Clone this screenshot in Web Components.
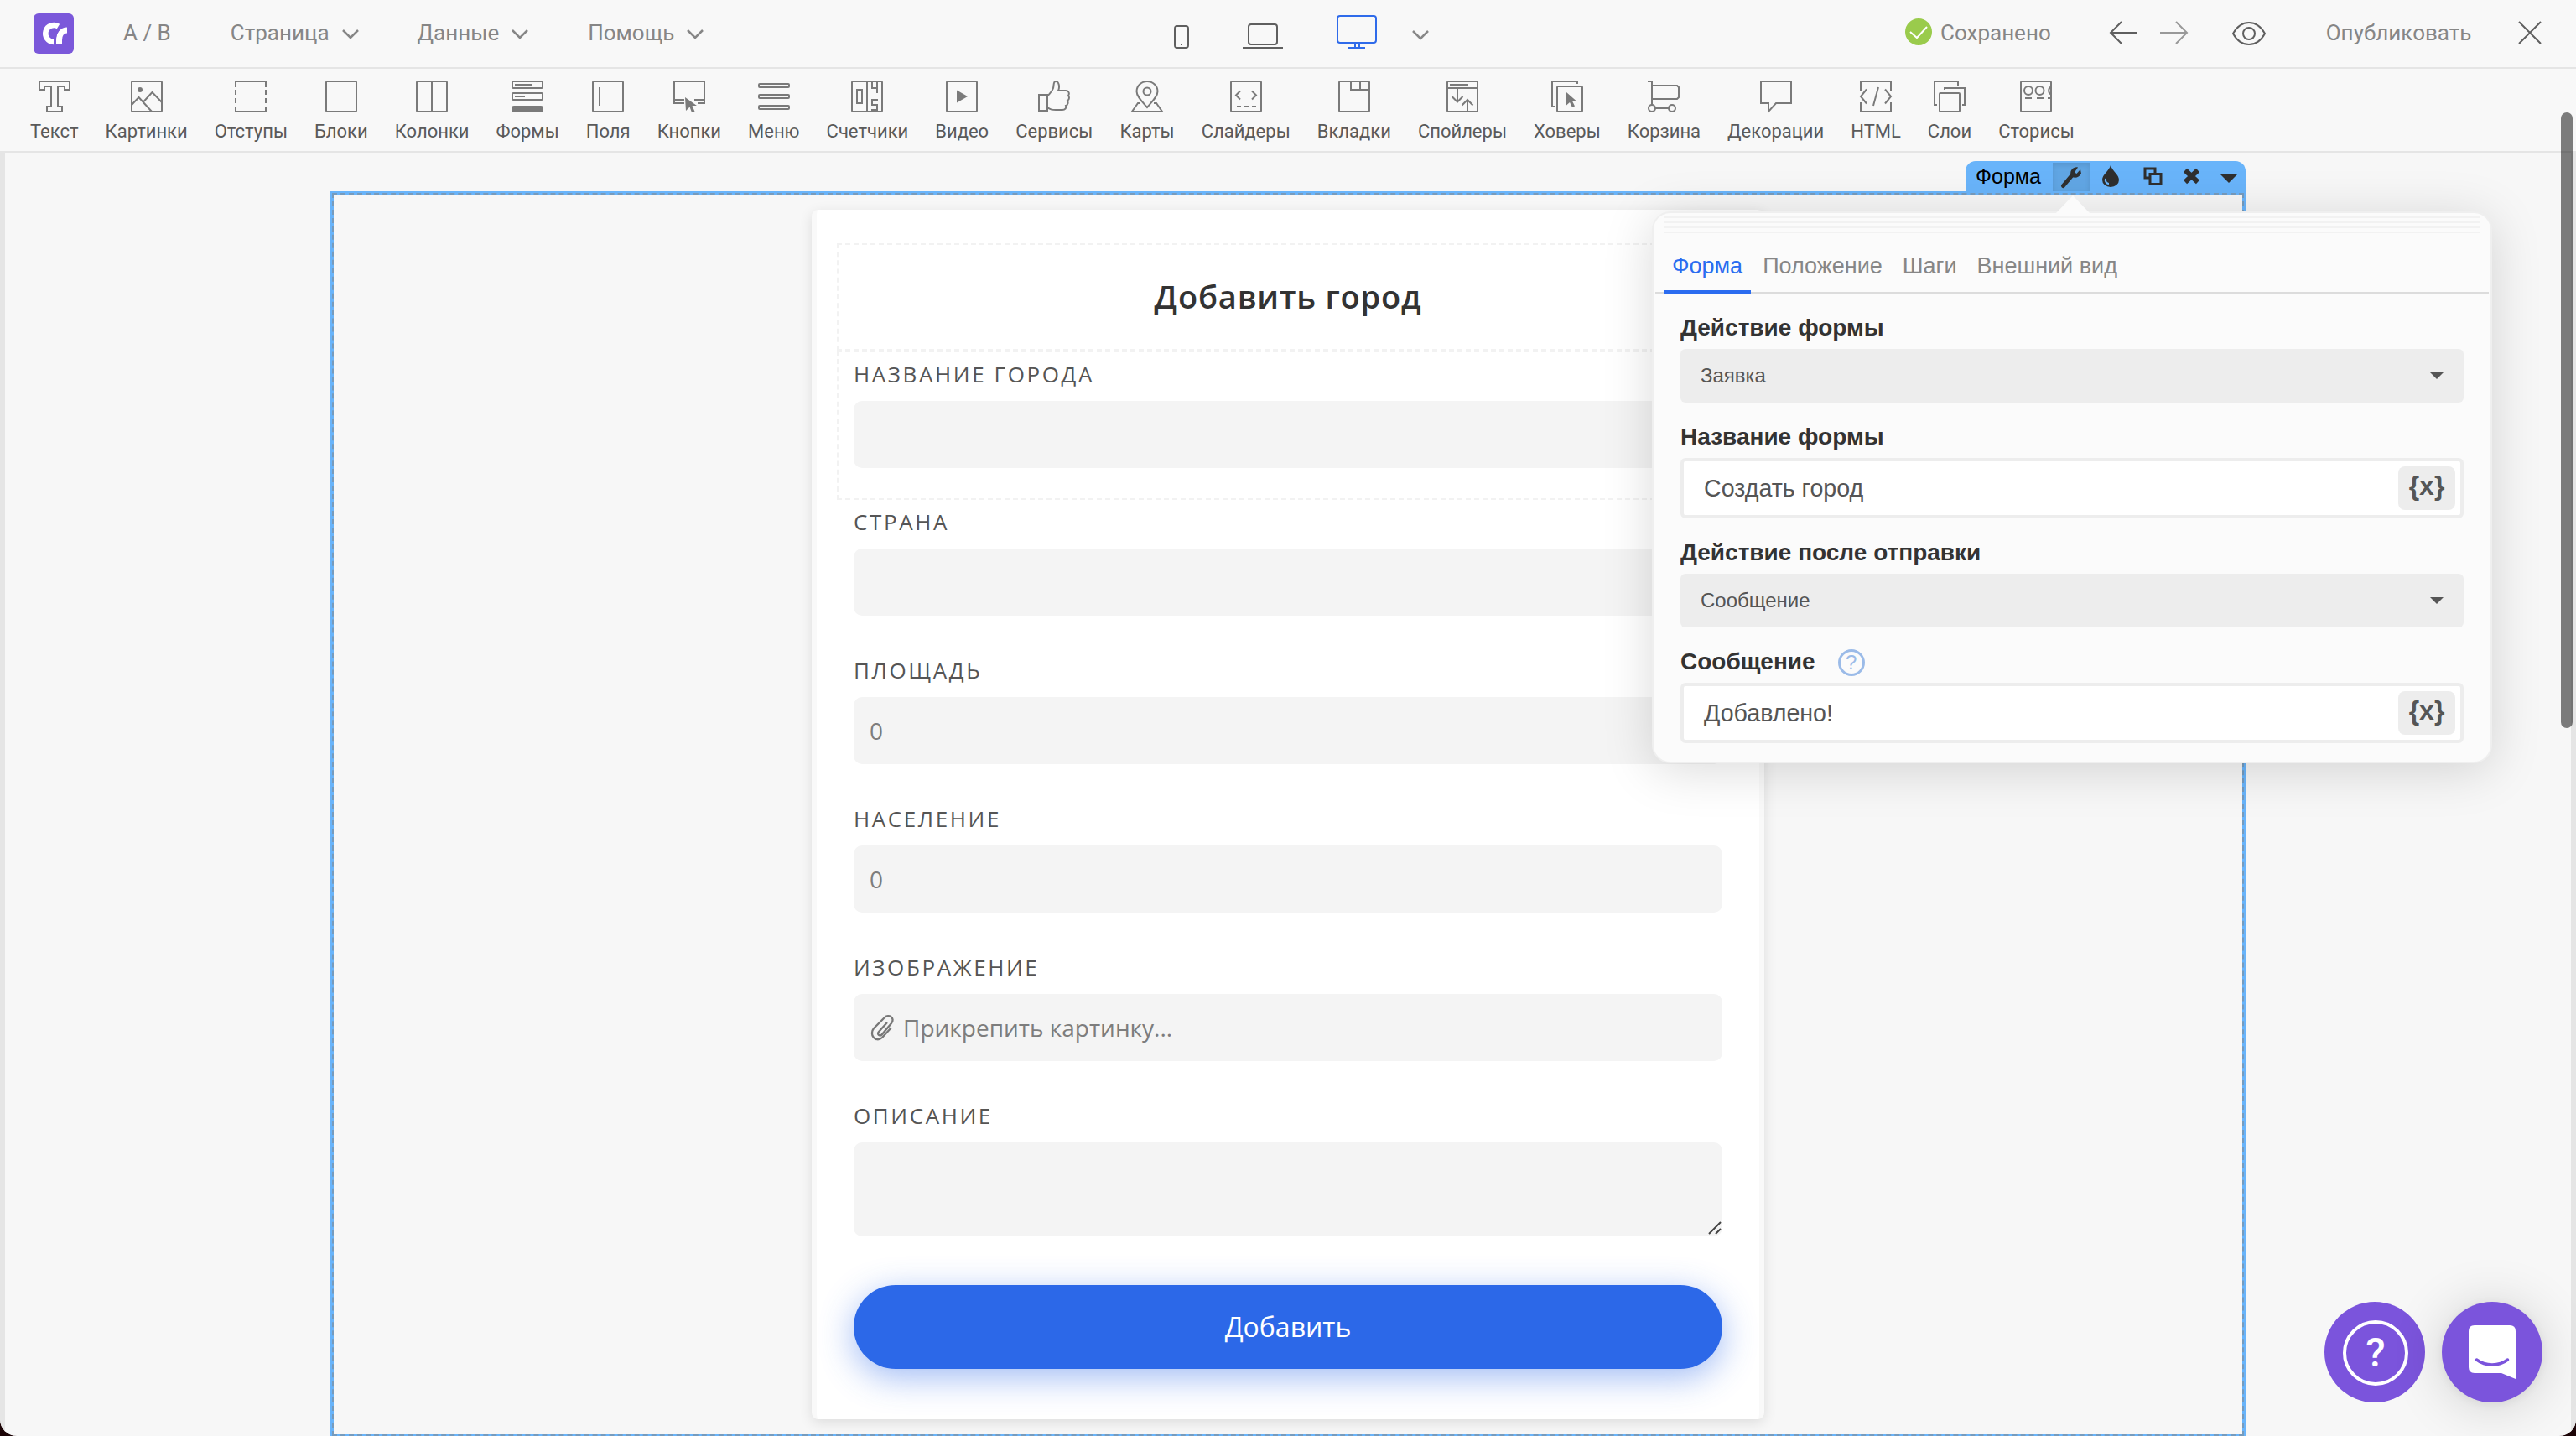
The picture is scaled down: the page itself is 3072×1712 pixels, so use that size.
<!DOCTYPE html>
<html lang="ru">
<head>
<meta charset="UTF-8">
<title>Редактор страницы</title>
<style>
    html, body {
        margin: 0;
        height: 100%;
        overflow: hidden;
        background: #1c0406;
    }

    body {
        --blue: #2c68e8;
        --frame: #69b4fa;
        --violet: #7b54dc;
        --grey: #868686;
        font-family: Roboto, "Liberation Sans", sans-serif;
    }
</style>
</head>
<body>
<editor-app></editor-app>

<script>
const ICONS = {
    // toolbar
    text: '<path d="M1 1H37V11H31V7H23V31H28V37H10V31H15V7H7V11H1Z"/>',
    images: '<rect x="1" y="1" width="36" height="36" rx="1"/><circle cx="11" cy="11" r="3" fill="currentColor" stroke="none"/><path d="M1 29L9.500 20L25 37M15 25.500L25.500 14L37 26"/>',
    spacing: '<path d="M1 8V1H37V8M1 31V37H37V31M1 11V17M1 21V27M37 11V17M37 21V27"/>',
    block: '<rect x="1" y="1" width="36" height="36" rx="1"/>',
    columns: '<rect x="1" y="1" width="36" height="36" rx="1"/><path d="M19 1V37"/>',
    forms: '<rect x="1" y="1" width="36" height="8" rx="1"/><path d="M4 5H25M4 19H16"/><rect x="1" y="15" width="36" height="8" rx="1"/><rect y="30" width="38" height="8" rx="3" fill="currentColor" stroke="none"/>',
    field: '<rect x="1" y="1" width="36" height="36" rx="1"/><path d="M9 8V30"/>',
    button: '<path d="M13 27H1V1H37V27H29M1 23H13M25 23H37"/><path d="M14 20L28 30H22.500L25.500 37L22 38L19.500 31.500L15 36Z" fill="currentColor" stroke="none"/>',
    menu: '<rect x="1" y="4" width="36" height="4" rx="1"/><rect x="1" y="17" width="36" height="4" rx="1"/><rect x="1" y="30" width="36" height="4" rx="1"/>',
    counter: '<rect x="1" y="1" width="36" height="36" rx="1"/><path d="M19 1V37M7 11H13V27H7ZM25 1V9H31M31 1V15M32 23H25V29H31V35H24"/>',
    video: '<rect x="1" y="1" width="36" height="36" rx="1"/><path d="M13 11.500L26 19L13 26.500Z" fill="currentColor" stroke="none"/>',
    thumb: '<path d="M1 17H11V36H1ZM11 32C15 35 17 35 21 35H29C32 35 34 33 33 30C36 29 36 26 35 24C38 22 37 19 36 18C38 15 36 12 33 12H24C26 8 25 1 21 1C18 1 19 5 18 9C17 13 14 15 11 19"/>',
    pin: '<path d="M19 32C13 25 6.500 19 6.500 13A12.500 12 0 0 1 31.500 13C31.500 19 25 25 19 32Z"/><circle cx="19" cy="13" r="4.500"/><path d="M11 27H8L1 37H37L30 27H27"/>',
    slider: '<rect x="1" y="1" width="36" height="36" rx="1"/><path d="M12 12.500L7 17.500L12 22.500M26 12.500L31 17.500L26 22.500M8 31H13M17 31H22M26 31H31"/>',
    tabs: '<rect x="1" y="1" width="36" height="36" rx="1"/><path d="M15 1V11H37M26 1V11"/>',
    spoiler: '<rect x="1" y="1" width="36" height="36" rx="1"/><path d="M1 9H37M4 5H26M13 10V25M6.500 19L13 25.500L19.500 19M25 37V23M18.500 29.500L25 23L31.500 29.500"/>',
    hover: '<path d="M4 31H1V1H31V4"/><rect x="7" y="7" width="30" height="30" rx="1"/><path d="M18 14L30 24.500H25L28 30.500L25 32L22 26L18 29.500Z" fill="currentColor" stroke="none"/>',
    cart: '<path d="M0 1H5V29M5 6H35L37 8V20L35 22H5M9 33H25"/><circle cx="5" cy="33" r="4"/><circle cx="29" cy="33" r="4"/>',
    decor: '<path d="M1 1H37V27H19L10 37V27H1Z"/>',
    html: '<path d="M1 12V1H37V12M1 26V37H37V26M8 10.500L1 19L8 27.500M30 10.500L37 19L30 27.500M22 8L16 30"/>',
    layers: '<path d="M29 6V1H1V29H4M13 11V9H37V29H34"/><rect x="7" y="15" width="24" height="22" rx="1"/>',
    stories: '<rect x="1" y="1" width="36" height="36" rx="1"/><circle cx="10" cy="12" r="5"/><circle cx="23.500" cy="12" r="5"/><path d="M37 7.500A5 5 0 0 0 37 16.500M6 21H14M20 21H28M33 21H37"/>',
    // top bar
    chevron: '<path d="M1 1L10 10L19 1" stroke-width="2.500"/>',
    phone: '<rect x="1" y="1" width="16" height="26" rx="3"/><path d="M8 23H10"/>',
    laptop: '<rect x="7" y="1" width="34" height="24" rx="3"/><path d="M0 29H48"/>',
    monitor: '<rect x="1" y="1" width="46" height="32" rx="3"/><path d="M22 33V39M27 33V39M14 39H34"/>',
    saved: '<circle cx="16" cy="16" r="16" fill="#9acb4c" stroke="none"/><path d="M6 16L14 23L26 10" stroke="#fff"/>',
    back: '<path d="M34 14H2M15 1L2 14L15 27"/>',
    forward: '<path d="M0 14H32M19 1L32 14L19 27"/>',
    eye: '<path d="M1 14C6 5 13 1 20 1C27 1 34 5 39 14C34 23 27 27 20 27C13 27 6 23 1 14Z"/><circle cx="20" cy="14" r="7"/>',
    close: '<path d="M1 1L27 27M27 1L1 27"/>',
    logo: '<rect width="48" height="48" rx="6" fill="#7b58da" stroke="none"/><path d="M29.500 15.500A10 10 0 1 0 24 34" stroke="#fff" stroke-width="6.500"/><path d="M30.500 37V32C30.500 25 34 20 40 20" stroke="#fff" stroke-width="7"/><path d="M25.500 37C24.500 29 27.500 20 34 15" stroke="#7b58da" stroke-width="2"/>',
    // selection tag
    wrench: '<path d="M2.500 22.500L13 10" stroke-width="5" stroke-linecap="round"/><path d="M23 3L18.500 8L16 6.500L20 0.500C15 -0.500 10 4 11.500 9.500C13 14 21 14 24 8Z" fill="currentColor" stroke="none"/>',
    drop: '<path d="M10 0C12 7 20 11 20 17.500A10 8.500 0 0 1 0 17.500C0 11 8 7 10 0Z" fill="currentColor" stroke="none"/><path d="M4 16C3 20 6 22 8 22" stroke="#69b4fa"/>',
    copy: '<path d="M7 13H2V2H14V7" stroke-width="3"/><rect x="8" y="8.500" width="13" height="12" stroke-width="3"/>',
    remove: '<path d="M3 3L18 17M18 3L3 17" stroke-width="6"/>',
    triangle: '<path d="M0 0H20L10 10Z" fill="currentColor" stroke="none"/>',
    // form and panel
    clip: '<path d="M21 10L11 21C8 24.500 13 27 15 24L26 11C31 5 23 -1 18 4L5 17C-1 24 7 35 15 28L26 16" stroke-width="2.300"/>',
    caret: '<path d="M0 0H16L8 8Z" fill="currentColor" stroke="none"/>',
    help: '<circle cx="16" cy="16" r="14.500" stroke-width="3"/>',
    grip: '<path d="M1 15L15 1M9 15L15 9"/>',
    messenger: '<path d="M7 0H49Q56 0 56 7V64L39 57H7Q0 57 0 50V7Q0 0 7 0Z" fill="#fff" stroke="none"/><path d="M9.500 41C20 49 36 49 46.500 41" stroke="#7b54dc" stroke-width="3.500" stroke-linecap="round"/>'
};

class UiIcon extends HTMLElement {
    connectedCallback() {
        const w = this.getAttribute('w') || 38;
        const h = this.getAttribute('h') || w;
        this.attachShadow({ mode: 'open' });
        this.shadowRoot.innerHTML = `
            <style>
                :host { display: block; flex: none; width: ${w}px; height: ${h}px; }
                svg { display: block; overflow: visible; }
            </style>
            <svg width="${w}" height="${h}" viewBox="0 0 ${w} ${h}" fill="none" stroke="currentColor" stroke-width="2">${ICONS[this.getAttribute('name')]}</svg>
        `;
    }
}

class TopBar extends HTMLElement {
    connectedCallback() {
        this.attachShadow({ mode: 'open' });
        this.shadowRoot.innerHTML = `
            <style>
                :host {
                    display: grid;
                    grid-template-columns: 1400px 872px 1fr;
                    align-items: center;
                    height: 80px;
                    border-bottom: 2px solid #e5e5e5;
                    background: #f8f8f8;
                    color: var(--grey);
                    font-size: 26px;
                }
                .group { display: flex; align-items: center; height: 78px; padding-bottom: 2px; }
                .menu { padding-left: 40px; }
                .logo { margin-top: 2px; }
                .ab { margin-left: 59px; margin-right: 1px; }
                .item { display: flex; align-items: center; gap: 15px; margin-left: 70px; }
                .item:last-child { margin-left: 71px; }
                .item ui-icon { margin-top: 3px; }
                .devices { color: #5f5f5f; align-items: flex-end; height: 58px; padding: 0; align-self: start; }
                .laptop { margin-left: 64px; }
                .monitor { margin-left: 64px; color: #2f6bea; }
                .more { margin: 0 0 12px 42px; color: #888; }
                .saved { margin-right: 10px; margin-top: -2px; }
                .back { margin-left: 69px; color: #5f5f5f; }
                .forward { margin-left: 27px; color: #999; }
                .eye { margin: 2px 0 0 52px; color: #5f5f5f; }
                .publish { margin-left: 72px; }
                .close { margin-left: auto; margin-right: 41px; color: #5f5f5f; }
            </style>
            <div class="group menu">
                <ui-icon class="logo" name="logo" w="48"></ui-icon>
                <span class="ab">A / B</span>
                <div class="item"><span>Страница</span><ui-icon name="chevron" w="20" h="11"></ui-icon></div>
                <div class="item"><span>Данные</span><ui-icon name="chevron" w="20" h="11"></ui-icon></div>
                <div class="item"><span>Помощь</span><ui-icon name="chevron" w="20" h="11"></ui-icon></div>
            </div>
            <div class="group devices">
                <ui-icon name="phone" w="18" h="28"></ui-icon>
                <ui-icon class="laptop" name="laptop" w="48" h="30"></ui-icon>
                <ui-icon class="monitor" name="monitor" w="48" h="40"></ui-icon>
                <ui-icon class="more" name="chevron" w="20" h="10"></ui-icon>
            </div>
            <div class="group">
                <ui-icon class="saved" name="saved" w="32"></ui-icon>
                <span>Сохранено</span>
                <ui-icon class="back" name="back" w="34" h="28"></ui-icon>
                <ui-icon class="forward" name="forward" w="34" h="28"></ui-icon>
                <ui-icon class="eye" name="eye" w="40" h="28"></ui-icon>
                <span class="publish">Опубликовать</span>
                <ui-icon class="close" name="close" w="28"></ui-icon>
            </div>
        `;
    }
}

const TOOLS = [
    ['text', 'Текст'], ['images', 'Картинки'], ['spacing', 'Отступы'], ['block', 'Блоки'],
    ['columns', 'Колонки'], ['forms', 'Формы'], ['field', 'Поля'], ['button', 'Кнопки'],
    ['menu', 'Меню'], ['counter', 'Счетчики'], ['video', 'Видео'], ['thumb', 'Сервисы'],
    ['pin', 'Карты'], ['slider', 'Слайдеры'], ['tabs', 'Вкладки'], ['spoiler', 'Спойлеры'],
    ['hover', 'Ховеры'], ['cart', 'Корзина'], ['decor', 'Декорации'], ['html', 'HTML'],
    ['layers', 'Слои'], ['stories', 'Сторисы']
];

class ToolBar extends HTMLElement {
    connectedCallback() {
        this.attachShadow({ mode: 'open' });
        this.shadowRoot.innerHTML = `
            <style>
                :host {
                    display: flex;
                    height: 98px;
                    padding-left: 20px;
                    border-bottom: 2px solid #e5e5e5;
                    background: #f8f8f8;
                }
                .tool {
                    display: flex;
                    flex-direction: column;
                    align-items: center;
                    gap: 9px;
                    padding: 14px 16px 0;
                    color: #7a7a7a;
                }
                span { color: #5a5a5a; font-size: 22px; line-height: 28px; }
            </style>
            ${TOOLS.map(([icon, label]) => `<div class="tool"><ui-icon name="${icon}"></ui-icon><span>${label}</span></div>`).join('')}
        `;
    }
}

class FormField extends HTMLElement {
    connectedCallback() {
        this.attachShadow({ mode: 'open' });
        this.shadowRoot.innerHTML = `
            <style>
                :host { display: block; height: 177px; }
                label {
                    display: block;
                    height: 37px;
                    padding-bottom: 13px;
                    color: #555;
                    font-size: 26px;
                    line-height: 37px;
                    letter-spacing: 2.6px;
                    text-transform: uppercase;
                }
                .box {
                    position: relative;
                    box-sizing: border-box;
                    display: flex;
                    align-items: center;
                    gap: 10px;
                    height: 80px;
                    padding: 0 19px;
                    border-radius: 10px;
                    background: #f4f4f4;
                    color: #7d7d7d;
                    font-size: 28px;
                }
                :host([multiline]) .box { height: 112px; }
                .grip { position: absolute; right: 1px; bottom: 2px; color: #444; }
            </style>
            <label>${this.getAttribute('label')}</label>
            <div class="box">
                <slot></slot>
                ${this.hasAttribute('multiline') ? '<ui-icon class="grip" name="grip" w="16"></ui-icon>' : ''}
            </div>
        `;
    }
}

class CityForm extends HTMLElement {
    connectedCallback() {
        this.attachShadow({ mode: 'open' });
        this.shadowRoot.innerHTML = `
            <style>
                :host {
                    display: block;
                    box-sizing: border-box;
                    width: 1136px;
                    height: 1442px;
                    padding: 40px 24px 0;
                    border: solid #f9f9f9;
                    border-width: 0 6px;
                    border-radius: 8px;
                    background: #fff;
                    box-shadow: 0 4px 16px rgba(0, 0, 0, 0.11);
                    font-family: "Open Sans", "Noto Sans", sans-serif;
                }
                .cell { box-sizing: border-box; border: 2px dashed #f2f2f2; }
                h2 {
                    height: 128px;
                    margin: 0;
                    color: #333;
                    font-size: 38px;
                    font-weight: 600;
                    line-height: 123px;
                    letter-spacing: 0.8px;
                    text-align: center;
                }
                .first { height: 178px; padding: 8px 18px 0; }
                .rest { padding: 8px 20px 0; }
                .clip { color: #777; margin-right: 1px; }
                button {
                    display: block;
                    width: 1036px;
                    height: 100px;
                    margin: 43px auto 0;
                    padding: 0 0 2px;
                    border: 0;
                    border-radius: 50px;
                    background: var(--blue);
                    box-shadow: 0 10px 40px rgba(44, 104, 232, 0.45);
                    color: #fff;
                    font: 32px "Open Sans", "Noto Sans", sans-serif;
                }
            </style>
            <h2 class="cell">Добавить город</h2>
            <div class="cell first"><form-field label="Название города"></form-field></div>
            <div class="rest">
                <form-field label="Страна"></form-field>
                <form-field label="Площадь">0</form-field>
                <form-field label="Население">0</form-field>
                <form-field label="Изображение"><ui-icon class="clip" name="clip" w="29" h="32"></ui-icon>Прикрепить картинку...</form-field>
                <form-field label="Описание" multiline></form-field>
            </div>
            <button>Добавить</button>
        `;
    }
}

class SelectionTag extends HTMLElement {
    connectedCallback() {
        this.attachShadow({ mode: 'open' });
        this.shadowRoot.innerHTML = `
            <style>
                :host {
                    display: flex;
                    align-items: center;
                    box-sizing: border-box;
                    width: 334px;
                    height: 36px;
                    padding-left: 12px;
                    border-radius: 12px 12px 0 0;
                    background: var(--frame);
                    color: #2f2f2f;
                    font: 25px "Liberation Sans", Arial, sans-serif;
                }
                .name { width: 92px; color: #000; line-height: 36px; }
                .active {
                    display: flex;
                    align-items: center;
                    justify-content: center;
                    align-self: flex-end;
                    width: 44px;
                    height: 34px;
                    background: #61a6e4;
                    box-shadow: inset 0 3px 6px rgba(0, 0, 0, 0.1);
                }
                .drop { margin-left: 15px; }
                .copy { margin-left: 29px; }
                .remove { margin-left: 24px; }
                .triangle { margin: 6px 0 0 24px; }
            </style>
            <span class="name">Форма</span>
            <div class="active"><ui-icon name="wrench" w="25"></ui-icon></div>
            <ui-icon class="drop" name="drop" w="20" h="26"></ui-icon>
            <ui-icon class="copy" name="copy" w="23" h="22"></ui-icon>
            <ui-icon class="remove" name="remove" w="21" h="20"></ui-icon>
            <ui-icon class="triangle" name="triangle" w="20" h="10"></ui-icon>
        `;
    }
}

class PanelField extends HTMLElement {
    connectedCallback() {
        const value = this.getAttribute('value');
        const control = this.hasAttribute('select')
            ? `<div class="select"><span>${value}</span><ui-icon name="caret" w="16" h="8"></ui-icon></div>`
            : `<div class="input"><span>${value}</span><b>{x}</b></div>`;
        this.attachShadow({ mode: 'open' });
        this.shadowRoot.innerHTML = `
            <style>
                :host { display: block; padding-top: 25px; }
                .label {
                    display: flex;
                    align-items: center;
                    height: 32px;
                    margin-bottom: 9px;
                    color: #333;
                    font-size: 28px;
                    font-weight: bold;
                    line-height: 32px;
                }
                .select, .input {
                    display: flex;
                    align-items: center;
                    justify-content: space-between;
                    box-sizing: border-box;
                    border-radius: 6px;
                    color: #555;
                }
                .select { height: 64px; padding: 0 24px; background: #ededed; font-size: 24px; }
                .input {
                    height: 72px;
                    padding: 0 6px 0 24px;
                    border: 4px solid #ededed;
                    background: #fff;
                    font-size: 28.6px;
                }
                b {
                    width: 68px;
                    height: 52px;
                    border-radius: 8px;
                    background: #ededed;
                    font: bold 32px/47px "Liberation Sans", sans-serif;
                    text-align: center;
                }
            </style>
            <div class="label">${this.getAttribute('label')}<slot></slot></div>
            ${control}
        `;
    }
}

class SettingsPanel extends HTMLElement {
    connectedCallback() {
        this.attachShadow({ mode: 'open' });
        this.shadowRoot.innerHTML = `
            <style>
                :host {
                    display: block;
                    box-sizing: border-box;
                    width: 1002px;
                    height: 658px;
                    border: 2px solid #efefef;
                    border-radius: 22px;
                    background: #fbfbfb;
                    box-shadow: 0 8px 60px rgba(0, 0, 0, 0.15);
                    font-family: "Liberation Sans", Arial, sans-serif;
                }
                .arrow {
                    position: absolute;
                    top: -21px;
                    left: 480px;
                    border: solid transparent;
                    border-width: 0 20px 21px;
                    border-bottom-color: #fbfbfb;
                }
                .handle {
                    height: 20px;
                    margin: 4px 12px 0;
                    background: repeating-linear-gradient(#f2f2f2 0 2px, transparent 2px 6px);
                }
                nav {
                    display: flex;
                    gap: 4px;
                    box-sizing: border-box;
                    height: 72px;
                    margin: 0 2px;
                    padding-left: 10px;
                    border-bottom: 2px solid #dcdcdc;
                    color: var(--grey);
                    font-size: 27px;
                    line-height: 78px;
                }
                nav span { height: 68px; padding: 0 10px; border-bottom: 4px solid transparent; }
                nav .on { border-color: #2b6cf0; color: #2b6cf0; }
                .fields { padding: 0 32px; }
                .help {
                    display: inline-grid;
                    place-items: center;
                    margin: 2px 0 0 27px;
                    color: #9bbbe8;
                    font: 24px/32px "Liberation Sans", sans-serif;
                }
                .help > * { grid-area: 1 / 1; }
            </style>
            <div class="arrow"></div>
            <div class="handle"></div>
            <nav>
                <span class="on">Форма</span><span>Положение</span><span>Шаги</span><span>Внешний вид</span>
            </nav>
            <div class="fields">
                <panel-field label="Действие формы" value="Заявка" select></panel-field>
                <panel-field label="Название формы" value="Создать город"></panel-field>
                <panel-field label="Действие после отправки" value="Сообщение" select></panel-field>
                <panel-field label="Сообщение" value="Добавлено!"><span class="help"><ui-icon name="help" w="32"></ui-icon><span>?</span></span></panel-field>
            </div>
        `;
    }
}

class ChatButtons extends HTMLElement {
    connectedCallback() {
        this.attachShadow({ mode: 'open' });
        this.shadowRoot.innerHTML = `
            <style>
                :host { display: flex; gap: 20px; }
                div {
                    display: grid;
                    place-items: center;
                    width: 120px;
                    height: 120px;
                    border-radius: 50%;
                    background: var(--violet);
                }
                .ring {
                    box-sizing: border-box;
                    width: 78px;
                    height: 78px;
                    margin: 2px 0 0 2px;
                    border: 4px solid #fff;
                    border-radius: 50%;
                    color: #fff;
                    font-size: 48px;
                    font-weight: 500;
                    line-height: 70px;
                    text-align: center;
                }
                .chat { box-shadow: 0 2px 12px rgba(0, 0, 0, 0.06), 0 4px 64px rgba(0, 0, 0, 0.16); }
            </style>
            <div><span class="ring">?</span></div>
            <div class="chat"><ui-icon name="messenger" w="56" h="64"></ui-icon></div>
        `;
    }
}

class EditorApp extends HTMLElement {
    connectedCallback() {
        this.attachShadow({ mode: 'open' });
        this.shadowRoot.innerHTML = `
            <style>
                :host {
                    display: flex;
                    flex-direction: column;
                    position: relative;
                    width: 3072px;
                    height: 1712px;
                    border-radius: 0 0 20px 20px;
                    overflow: hidden;
                    background: #f7f7f7;
                }
                main {
                    flex: 1;
                    min-height: 0;
                    padding: 46px 388px 0;
                    border: solid #e5e5e5;
                    border-width: 0 6px;
                }
                .frame {
                    position: relative;
                    box-sizing: border-box;
                    width: 2284px;
                    height: 1486px;
                    border: 2px solid var(--frame);
                }
                .content {
                    box-sizing: border-box;
                    height: 1482px;
                    padding-top: 18px;
                    border: 2px dashed rgba(128, 140, 150, 0.6);
                    background: linear-gradient(#f7f7f7, #f7f7f7) padding-box, linear-gradient(#69b4fa, #69b4fa) border-box;
                }
                city-form { margin: 0 auto; }
                selection-tag { position: absolute; right: -2px; top: -38px; }
                settings-panel { position: absolute; left: 1970px; top: 252px; }
                chat-buttons { position: absolute; right: 40px; bottom: 40px; }
                .scroll {
                    position: absolute;
                    right: 4px;
                    top: 134px;
                    width: 14px;
                    height: 734px;
                    border-radius: 7px;
                    background: rgba(0, 0, 0, 0.5);
                }
            </style>
            <top-bar></top-bar>
            <tool-bar></tool-bar>
            <main>
                <div class="frame">
                    <div class="content"><city-form></city-form></div>
                    <selection-tag></selection-tag>
                </div>
            </main>
            <settings-panel></settings-panel>
            <chat-buttons></chat-buttons>
            <div class="scroll"></div>
        `;
    }
}

customElements.define('ui-icon', UiIcon);
customElements.define('top-bar', TopBar);
customElements.define('tool-bar', ToolBar);
customElements.define('form-field', FormField);
customElements.define('city-form', CityForm);
customElements.define('selection-tag', SelectionTag);
customElements.define('panel-field', PanelField);
customElements.define('settings-panel', SettingsPanel);
customElements.define('chat-buttons', ChatButtons);
customElements.define('editor-app', EditorApp);
</script>
</body>
</html>
